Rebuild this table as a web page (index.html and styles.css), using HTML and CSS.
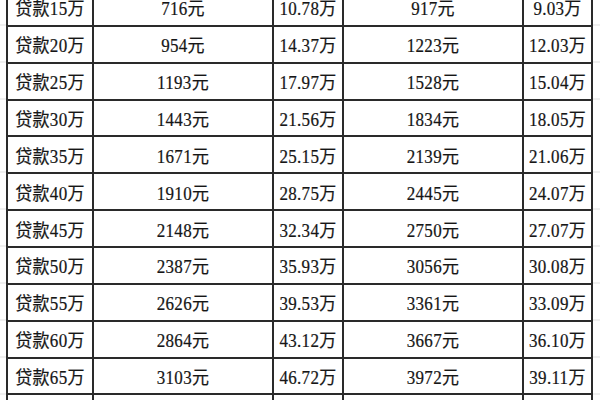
FILE: index.html
```html
<!DOCTYPE html>
<html lang="zh-CN">
<head>
<meta charset="utf-8">
<title>贷款月供表</title>
<link rel="stylesheet" href="styles.css">
</head>
<body>
<div class="sheet">
  <table class="loan">
    <colgroup>
      <col class="c1"><col class="c2"><col class="c3"><col class="c4"><col class="c5">
    </colgroup>
    <tbody>
      <tr><td><span>贷款15万</span></td><td><span>716元</span></td><td><span>10.78万</span></td><td><span>917元</span></td><td><span>9.03万</span></td></tr>
      <tr><td><span>贷款20万</span></td><td><span>954元</span></td><td><span>14.37万</span></td><td><span>1223元</span></td><td><span>12.03万</span></td></tr>
      <tr><td><span>贷款25万</span></td><td><span>1193元</span></td><td><span>17.97万</span></td><td><span>1528元</span></td><td><span>15.04万</span></td></tr>
      <tr><td><span>贷款30万</span></td><td><span>1443元</span></td><td><span>21.56万</span></td><td><span>1834元</span></td><td><span>18.05万</span></td></tr>
      <tr><td><span>贷款35万</span></td><td><span>1671元</span></td><td><span>25.15万</span></td><td><span>2139元</span></td><td><span>21.06万</span></td></tr>
      <tr><td><span>贷款40万</span></td><td><span>1910元</span></td><td><span>28.75万</span></td><td><span>2445元</span></td><td><span>24.07万</span></td></tr>
      <tr><td><span>贷款45万</span></td><td><span>2148元</span></td><td><span>32.34万</span></td><td><span>2750元</span></td><td><span>27.07万</span></td></tr>
      <tr><td><span>贷款50万</span></td><td><span>2387元</span></td><td><span>35.93万</span></td><td><span>3056元</span></td><td><span>30.08万</span></td></tr>
      <tr><td><span>贷款55万</span></td><td><span>2626元</span></td><td><span>39.53万</span></td><td><span>3361元</span></td><td><span>33.09万</span></td></tr>
      <tr><td><span>贷款60万</span></td><td><span>2864元</span></td><td><span>43.12万</span></td><td><span>3667元</span></td><td><span>36.10万</span></td></tr>
      <tr><td><span>贷款65万</span></td><td><span>3103元</span></td><td><span>46.72万</span></td><td><span>3972元</span></td><td><span>39.11万</span></td></tr>
      <tr class="blank"><td></td><td></td><td></td><td></td><td></td></tr>
    </tbody>
  </table>
</div>
</body>
</html>
```
FILE: styles.css
```css
html, body {
  margin: 0;
  padding: 0;
  background: #ffffff;
}

body {
  width: 600px;
  height: 400px;
  overflow: hidden;
}

.sheet {
  margin-top: -12px;
  padding-left: 6px;
  background-image: repeating-linear-gradient(
    to bottom,
    transparent 0,
    transparent 36px,
    #dedede 36px,
    #dedede 36.87px
  );
  background-position: 0 0.5px;
}

.loan {
  border-collapse: collapse;
  table-layout: fixed;
  width: 587px;
  background: #ffffff;
  font-family: "Liberation Serif", "Noto Sans CJK SC", serif;
  font-size: 17px;
  color: #161616;
}

.c1 { width: 86px; }
.c2 { width: 180px; }
.c3 { width: 70px; }
.c4 { width: 180px; }
.c5 { width: 69px; }

.loan tr {
  height: 36.87px;
}

.loan td {
  border: 2px solid #2a2a2a;
  padding: 5px 0 0 0;
  text-align: center;
  vertical-align: middle;
  line-height: 1;
  white-space: nowrap;
  letter-spacing: 0.3px;
}

.loan td span {
  display: inline-block;
  transform: scaleY(1.08);
  -webkit-text-stroke: 0.2px #161616;
}
```
